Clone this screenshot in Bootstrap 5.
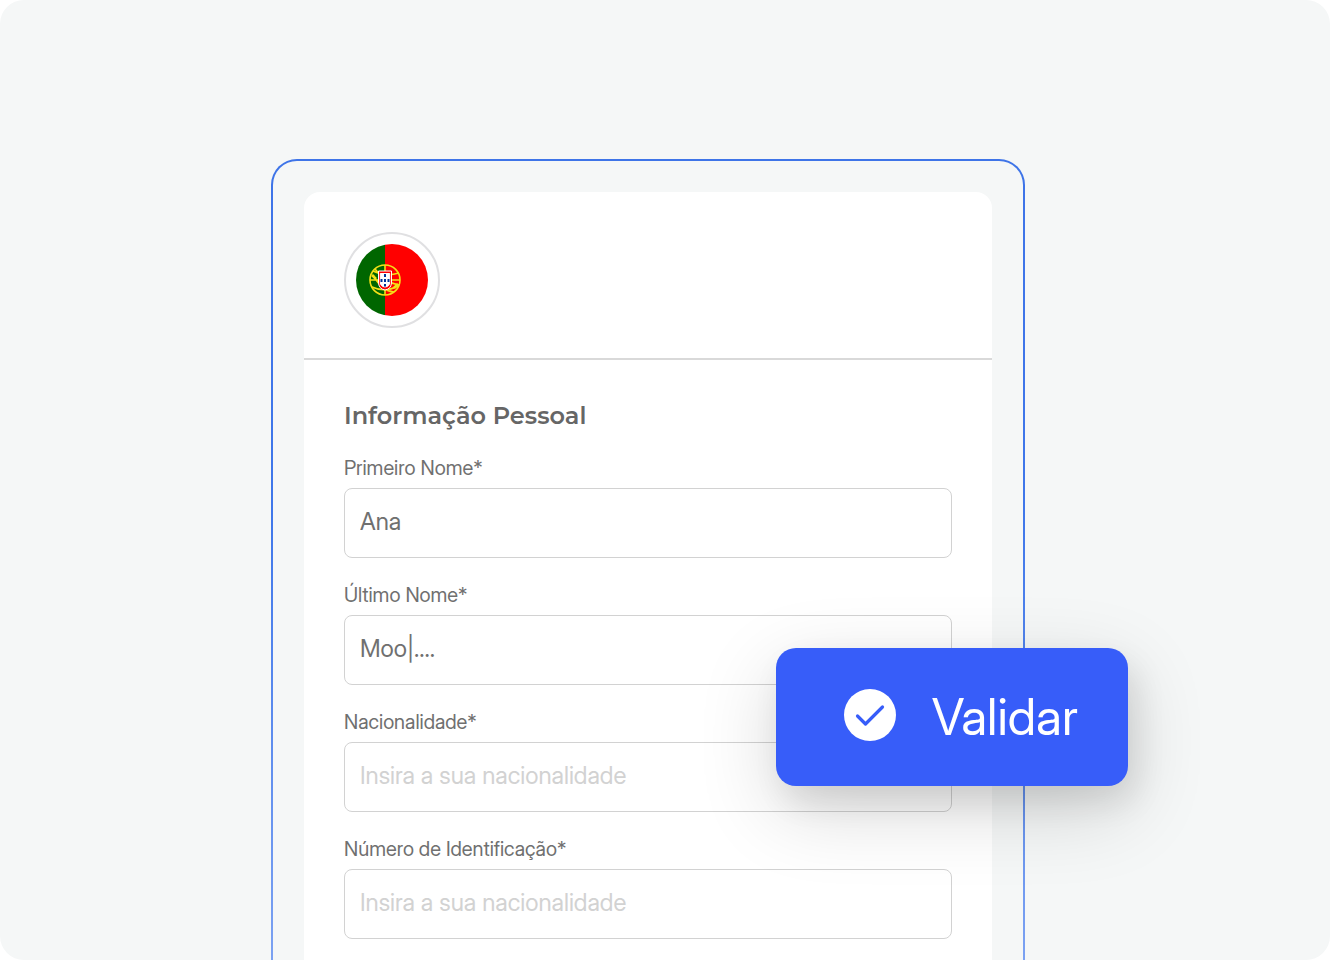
<!DOCTYPE html>
<html lang="pt">
<head>
<meta charset="utf-8">
<meta name="viewport" content="width=device-width, initial-scale=1">
<title>Informação Pessoal</title>
<link rel="stylesheet" href="https://cdn.jsdelivr.net/npm/bootstrap@5.3.0/dist/css/bootstrap.min.css">
<style>
  body { font-family: "Inter Display", Inter, "Liberation Sans", sans-serif; background: #fff; color: #666; }
  .stage { background: #f5f7f7; border-radius: 24px; padding: 159px 34px 0 0; }
  .frame {
    width: 100%; max-width: 754px; min-height: calc(100% + 48px); padding: 31px;
    border: 2px solid transparent; border-radius: 26px;
    background: linear-gradient(#f5f7f7, #f5f7f7) padding-box,
                linear-gradient(#3e74e8, #3f77ea 40%, #86a9f3) border-box;
  }
  .panel { border: 0; border-radius: 16px; }
  .panel-top { padding: 40px 40px 30px; border-bottom: 2px solid #d9d9d9; }
  .panel-main { padding: 40px; }
  .flag-ring { width: 96px; height: 96px; border: 2px solid #e0e0e2; }
  .section-title { font-family: Montserrat, Inter, sans-serif; font-size: 24px; line-height: 32px; font-weight: 600; margin-bottom: 24px; }
  .field { margin-bottom: 25px; }
  .field .form-label { display: block; font-size: 20px; line-height: 24px; font-weight: 400; color: #707070; margin-bottom: 8px; }
  .field .form-control { height: 70px; padding: 0 15px 3px; font-size: 24px; font-weight: 400; color: #707070; border: 1px solid #d2d2d2; border-radius: 8px; }
  .field .form-control::placeholder { color: #d2d2d2; opacity: 1; }
  .validate {
    top: 487px; right: -105px; width: 352px; height: 138px; padding: 0 50px 0 68px;
    background: #375df9; border: 0; border-radius: 20px; color: #fff; font-size: 50px; font-weight: 400;
    box-shadow: 0 24px 80px rgba(0,0,0,.16), 8px 16px 32px rgba(0,0,0,.09);
  }
  .validate svg { margin-bottom: 4px; }
  .validate:hover { background: #375df9; color: #fff; }
</style>
</head>
<body>
<main class="stage vh-100 overflow-hidden d-flex justify-content-center align-items-start">
  <div class="frame position-relative">
    <form class="card panel">
      <header class="panel-top">
        <div class="flag-ring rounded-circle d-flex align-items-center justify-content-center">
          <svg width="72" height="72" viewBox="0 0 72 72" role="img" aria-label="Portugal">
            <defs><clipPath id="disc"><circle cx="36" cy="36" r="36"/></clipPath></defs>
            <g clip-path="url(#disc)">
              <path fill="#f00" d="M29 0h43v72H29z"/>
              <path fill="#060" d="M0 0h29v72H0z"/>
            </g>
            <g fill="none" stroke="#f4e017" stroke-width="1.600">
              <circle cx="29" cy="36" r="15"/>
              <path d="M14 36h30M29 21v30M17 27Q29 33 43 29M16 43Q29 49 42 42M19 25Q29 39 43 41M17 31Q26 47 38 48"/>
              <path d="M16 31l4 4M38 44l4-4" stroke-width="2.500"/>
            </g>
            <path d="M22.500 27h13v11q0 7-6.500 8-6.500-1-6.500-8z" fill="#f00" stroke="#fff" stroke-width="1"/>
            <path d="M24.300 29.500h9.400v8.500q0 4.500-4.700 5-4.700-.5-4.700-5z" fill="#fff" stroke="#fff"/>
            <g fill="#039"><path d="M28 30h2v3h-2zM28 35h2v3h-2zM28 40h2v2.500h-2zM24.500 35h2v3h-2zM31.500 35h2v3h-2z"/></g>
          </svg>
        </div>
      </header>
      <div class="panel-main">
        <h1 class="section-title">Informação Pessoal</h1>
        <div class="field">
          <label class="form-label" for="primeiro">Primeiro Nome*</label>
          <input class="form-control" id="primeiro" type="text" value="Ana">
        </div>
        <div class="field">
          <label class="form-label" for="ultimo">Último Nome*</label>
          <input class="form-control" id="ultimo" type="text" value="Moo|....">
        </div>
        <div class="field">
          <label class="form-label" for="nacionalidade">Nacionalidade*</label>
          <input class="form-control" id="nacionalidade" type="text" placeholder="Insira a sua nacionalidade">
        </div>
        <div class="field">
          <label class="form-label" for="identificacao">Número de Identificação*</label>
          <input class="form-control" id="identificacao" type="text" placeholder="Insira a sua nacionalidade">
        </div>
      </div>
    </form>
    <button class="btn validate position-absolute d-flex align-items-center justify-content-between" type="button">
      <svg width="52" height="52" viewBox="0 0 52 52" aria-hidden="true">
        <circle cx="26" cy="26" r="26" fill="#fff"/>
        <path d="M13.500 27l8 8L38.500 18" fill="none" stroke="#375df9" stroke-width="3.200" stroke-linecap="round" stroke-linejoin="round"/>
      </svg>
      <span>Validar</span>
    </button>
  </div>
</main>
<script src="https://cdn.jsdelivr.net/npm/bootstrap@5.3.0/dist/js/bootstrap.bundle.min.js"></script>
</body>
</html>
